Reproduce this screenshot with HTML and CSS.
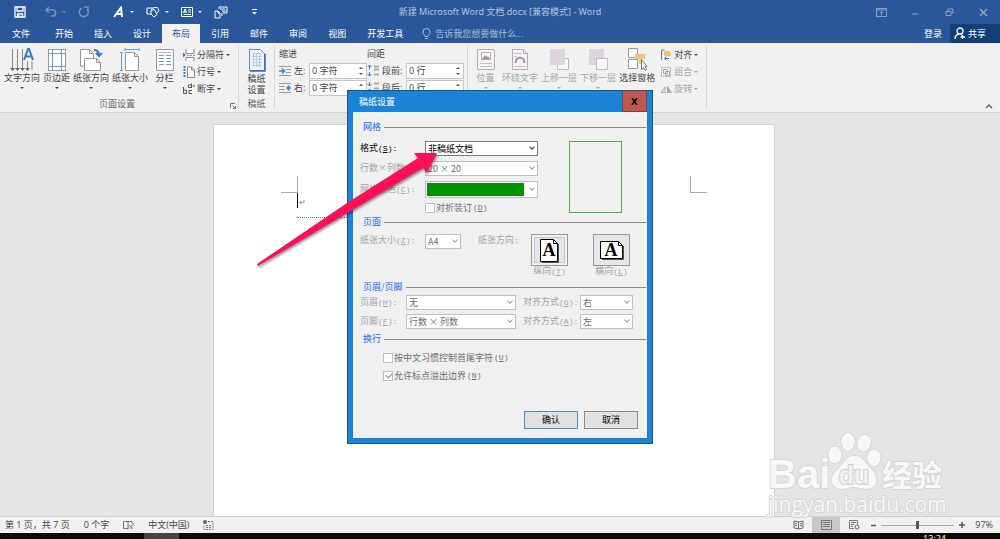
FILE: index.html
```html
<!DOCTYPE html>
<html lang="zh-CN">
<head>
    <meta charset="UTF-8">
    <meta name="viewport" content="width=device-width, initial-scale=1.0">
    <title>新建 Microsoft Word 文档.docx</title>
    <link rel="stylesheet" href="styles.css">
</head>
<body>
    <header class="titlebar">
        <div class="quick">
            <button class="qbtn" aria-label="保存"><svg width="12" height="12" viewBox="0 0 12 12"><path d="M1 1h10v10H1z M3 1v4h6V1 M3.500 11V8h5v3 M5 9v2" fill="none" stroke="#fff" stroke-width="1.300"/></svg></button>
            <button class="qbtn wide dim" aria-label="撤消"><svg width="12" height="12" viewBox="0 0 12 12"><path d="M4 1L1 4l3 3M1 4h6a3 3 0 0 1 1 6H6" fill="none" stroke="#fff" stroke-width="1.500"/></svg><i class="caret"></i></button>
            <button class="qbtn redo dim" aria-label="重复"><svg width="12" height="12" viewBox="0 0 12 12"><path d="M4 2a4.500 4.500 0 1 0 5 1M6 1h4v4" fill="none" stroke="#fff" stroke-width="1.500"/></svg></button>
            <button class="qbtn wide" aria-label="艺术字"><svg width="12" height="12" viewBox="0 0 12 12"><path d="M1 11L8 1.500 9 11M4 8h5" fill="none" stroke="#fff" stroke-width="2"/></svg><i class="caret"></i></button>
            <button class="qbtn wide" aria-label="形状"><svg width="14" height="12" viewBox="0 0 14 12"><path d="M5 8H1V2h6M5 4l3-2.500h3a3 3 0 0 1 0 5.500M5 4.500l3.500-1 2.500 5-3 2.500L5 8z" fill="none" stroke="#fff"/></svg><i class="caret"></i></button>
            <button class="qbtn wide" aria-label="文本框"><svg width="12" height="12" viewBox="0 0 12 12"><path d="M.5 1.500h11v9H.5zM2.500 7l1.500-4L5.500 7M2.500 6h3M7 4h3M7 6h3M2.500 8.500H10" fill="none" stroke="#fff"/></svg><i class="caret"></i></button>
            <button class="qbtn wide" aria-label="切换窗口"><svg width="14" height="13" viewBox="0 0 14 13"><path d="M1 5h3l2 2v5H1zM5 3V1h8v6H9M6 3h5M4 5v2h2M8 5h4M8 7v3" fill="none" stroke="#fff"/></svg></button>
            <button class="qbtn" aria-label="自定义"><svg width="7" height="6" viewBox="0 0 7 6"><path d="M1 .5h5" stroke="#fff"/><path d="M1 3h5L3.500 5.500z" fill="#fff"/></svg></button>
        </div>
        <h1 class="doc-title">新建 Microsoft Word 文档.docx [兼容模式] - Word</h1>
        <div class="window-btns">
            <button aria-label="功能区选项"><svg width="11" height="9" viewBox="0 0 11 9"><path d="M.5.5h10v8H.5zM.5 2h10M5.500 7.500V4M4 5l1.500-1.500L7 5" fill="none" stroke="currentColor"/></svg></button>
            <button aria-label="最小化"><svg width="8" height="9" viewBox="0 0 8 9"><path d="M1 6h6" stroke="currentColor"/></svg></button>
            <button aria-label="还原"><svg width="9" height="9" viewBox="0 0 9 9"><path d="M1 3.500h5v4H1zM3 3V1h5v4H6" fill="none" stroke="currentColor"/></svg></button>
            <button aria-label="关闭"><svg width="9" height="9" viewBox="0 0 9 9"><path d="M1 1l7 7M8 1L1 8" stroke="currentColor" stroke-width="1.500"/></svg></button>
        </div>
    </header>

    <nav class="tabs">
        <button class="tab file">文件</button>
        <button class="tab">开始</button>
        <button class="tab">插入</button>
        <button class="tab">设计</button>
        <button class="tab active">布局</button>
        <button class="tab">引用</button>
        <button class="tab">邮件</button>
        <button class="tab">审阅</button>
        <button class="tab">视图</button>
        <button class="tab">开发工具</button>
        <button class="tell"><svg width="9" height="12" viewBox="0 0 9 12"><path d="M3 8.500C3 7 1 6.500 1 4a3.500 3.500 0 0 1 7 0c0 2.500-2 3-2 4.500zM3 10.500h3" fill="none" stroke="currentColor"/></svg>告诉我您想要做什么...</button>
        <button class="login">登录</button>
        <button class="share"><svg width="12" height="13" viewBox="0 0 12 13"><circle cx="6" cy="4" r="3" fill="none" stroke="#fff" stroke-width="1.300"/><path d="M1 12c0-3 2-4.500 4-5M7 7l1 1M8.500 8v4M6.500 10h4.500" fill="none" stroke="#fff" stroke-width="1.300"/></svg>共享</button>
    </nav>

    <div class="ribbon">
        <section class="group">
            <div class="tools">
                <button class="big"><svg width="24" height="24" viewBox="0 0 24 24"><path d="M2.500 1v21M7.500 1v21M12.500 1v21M17.500 13v9M22 13v9" stroke="#888"/><path d="M0 20h5l-2.500 3zM5 20h5l-2.500 3zM10 20h5l-2.500 3zM15 20h5l-2.500 3z" fill="#666"/><path d="M14 12l4-11h1l4 11M15 8.500h7" fill="none" stroke="#3b7dbd" stroke-width="2"/></svg>文字方向<i class="caret"></i></button>
                <button class="big"><svg width="18" height="24" viewBox="0 0 18 24"><path d="M.5 1.500h17v21H.5z" fill="#fff" stroke="#999"/><path d="M4.500 2v20M13.500 2v20M1 5.500h16M1 18.500h16" stroke="#6c9fd0"/></svg>页边距<i class="caret"></i></button>
                <button class="big"><svg width="24" height="24" viewBox="0 0 24 24"><path d="M1.500 1.500h9l4 4V18h-13zM10.500 1.500v4h4" fill="#fff" stroke="#999"/><path d="M5.500 10.500h12l4 4v8h-16zM17.500 10.500v4h4" fill="#fff" stroke="#999"/><path d="M15 2c4 0 5 2 5 5M17 5l3 3 3-3" fill="none" stroke="#3b7dbd" stroke-width="2"/></svg>纸张方向<i class="caret"></i></button>
                <button class="big"><svg width="22" height="24" viewBox="0 0 22 24"><path d="M6.500 4.500h9l4 4v14h-13zM15.500 4.500v4h4" fill="#fff" stroke="#999"/><path d="M6 1.500h14M6 0v3M20 0v3M2.500 4v18M1 4.500h3M1 22.500h3" stroke="#6c9fd0"/></svg>纸张大小<i class="caret"></i></button>
                <button class="big"><svg width="18" height="24" viewBox="0 0 18 24"><path d="M.5 1.500h17v21H.5z" fill="#fff" stroke="#999"/><path d="M3 4.500h12" stroke="#bbb"/><path d="M3 7.500h5M10 7.500h5M3 10.500h5M10 10.500h5M3 13.500h5M10 13.500h5M3 16.500h5M10 16.500h5" stroke="#6c9fd0"/></svg>分栏<i class="caret"></i></button>
                <div class="stack">
                    <button class="small"><svg width="12" height="12" viewBox="0 0 12 12"><path d="M3 0v4.500h8V0M3 12V8.500h8V12" fill="#fff" stroke="#888"/><path d="M4 6.500h8" stroke="#888" stroke-dasharray="2 1"/><path d="M0 3.500L3 6 0 8.500z" fill="#3b7dbd"/></svg>分隔符<i class="caret"></i></button>
                    <button class="small"><svg width="12" height="12" viewBox="0 0 12 12"><path d="M4.500 1h4l3 3v7.500h-7zM8.500 1v3h3" fill="#fff" stroke="#888"/><path d="M1.500 0v12" stroke="#3b7dbd" stroke-width="2" stroke-dasharray="2 1"/></svg>行号<i class="caret"></i></button>
                    <button class="small"><svg width="12" height="12" viewBox="0 0 12 12"><path d="M.5 4v6.500M.5 7h3v3.500h-3M8.500 4.500h-3V2h3V.500M8.500 2v3M9 7.500H6v3h3M9.500 3h2.500" fill="none" stroke="#555"/></svg>断字<i class="caret"></i></button>
                </div>
            </div>
            <div class="group-name">页面设置<svg class="launcher" width="6" height="6" viewBox="0 0 6 6"><path d="M.5 5V.5H5M2.500 2.500l3 3M5.500 3v2.500H3" fill="none" stroke="#777"/></svg></div>
        </section>
        <section class="group narrow">
            <div class="tools">
                <button class="big"><svg width="18" height="24" viewBox="0 0 18 24"><path d="M1.500 1.500h11l4 4v17h-15z" fill="#eef2f9" stroke="#7089b5"/><path d="M17 6v17H2" fill="none" stroke="#3b68b0" stroke-width="1.500"/><path d="M4 5.500h8M4 8.500h10M4 11.500h10M4 14.500h10M4 17.500h10M5.500 5v14M8.500 5v14M11.500 5v14" stroke="#bccbe4"/></svg><span>稿纸</span><span>设置</span></button>
            </div>
            <div class="group-name">稿纸</div>
        </section>
        <section class="group">
            <div class="spacing">
                <span class="col-name">缩进</span><span class="col-name">间距</span>
                <label class="spin"><svg width="13" height="11" viewBox="0 0 13 11"><path d="M0 1.500h12M7 4.500h5M7 7.500h5M0 10.500h12" stroke="#999"/><path d="M0 6h4M3 3.500L5.500 6 3 8.500" fill="none" stroke="#3b7dbd" stroke-width="1.500"/></svg><span>左:</span><input type="text" value="0 字符"><i class="updown"></i></label>
                <label class="spin gap-col"><svg width="13" height="13" viewBox="0 0 13 13"><path d="M7 2.500h5M7 5.500h5M7 10.500h5" stroke="#aaa" stroke-width="2"/><path d="M2.500 1v4M.5 3l2-2 2 2M2.500 8v4M.5 10l2 2 2-2" fill="none" stroke="#3b7dbd"/></svg><span>段前:</span><input type="text" value="0 行"><i class="updown"></i></label>
                <label class="spin"><svg width="13" height="11" viewBox="0 0 13 11"><path d="M0 1.500h12M0 4.500h6M0 7.500h6M0 10.500h12" stroke="#999"/><path d="M8 6h4M10.500 3.500L8 6l2.500 2.500" fill="none" stroke="#3b7dbd" stroke-width="1.500"/></svg><span>右:</span><input type="text" value="0 字符"><i class="updown"></i></label>
                <label class="spin gap-col"><svg width="13" height="13" viewBox="0 0 13 13"><path d="M7 2.500h5M7 7.500h5M7 10.500h5" stroke="#aaa" stroke-width="2"/><path d="M2.500 1v4M.5 3l2 2 2-2M2.500 8v4M.5 10l2-2 2 2" fill="none" stroke="#3b7dbd"/></svg><span>段后:</span><input type="text" value="0 行"><i class="updown"></i></label>
            </div>
        </section>
        <section class="group">
            <div class="tools">
                <button class="big" disabled><svg width="18" height="24" viewBox="0 0 18 24"><path d="M.5 1.500h17v20H.5z" fill="#f6f2f6" stroke="#b5adb5"/><path d="M4.500 4.500h9v7h-9z" fill="#fff" stroke="#aaa"/><path d="M5 11l3-4 2 2 1-1 2 3z" fill="#999"/><path d="M3 15.500h12M3 18.500h12" stroke="#c5bdc5"/></svg>位置<i class="caret"></i></button>
                <button class="big" disabled><svg width="18" height="24" viewBox="0 0 18 24"><path d="M1.500 1.500h11l4 4v16h-15zM12.500 1.500v4h4" fill="#f6f2f6" stroke="#b5adb5"/><path d="M3 5.500h8M3 8.500h3M3 18.500h12" stroke="#c5bdc5"/><path d="M4.500 15c0-7 9-7 9 0" fill="none" stroke="#999" stroke-width="2"/></svg>环绕文字<i class="caret"></i></button>
                <button class="big" disabled><svg width="22" height="24" viewBox="0 0 22 24"><path d="M9.500 10.500h11v11h-11z" fill="#faf6fa" stroke="#c0b8c0"/><path d="M2 1h15v16H2z" fill="#ddd5dc"/></svg>上移一层<i class="caret"></i></button>
                <button class="big" disabled><svg width="22" height="24" viewBox="0 0 22 24"><path d="M2 1h15v16H2z" fill="#ddd5dc"/><path d="M9.500 10.500h11v11h-11z" fill="#faf6fa" stroke="#c0b8c0"/></svg>下移一层<i class="caret"></i></button>
                <button class="big"><svg width="22" height="24" viewBox="0 0 22 24"><path d="M2.500.5h9v9h-9zM2.500 11.500h9v9h-9z" fill="#fff" stroke="#999"/><path d="M9 6h10v5h-4v5h-2v-5H9z" fill="#efc56f"/><path d="M15.500 11.500v10l2-2 1.500 3 1.500-1-1.500-3h2z" fill="#fff" stroke="#777"/></svg>选择窗格</button>
                <div class="stack">
                    <button class="small"><svg width="12" height="12" viewBox="0 0 12 12"><path d="M4.500 1H1.500v10" fill="none" stroke="#777"/><path d="M4 2h6v2h1v3H4z" fill="#efc56f"/><path d="M9 9.500H5M6.500 7.500l-2 2 2 2" fill="none" stroke="#3b7dbd"/></svg>对齐<i class="caret"></i></button>
                    <button class="small" disabled><svg width="12" height="12" viewBox="0 0 12 12"><path d="M1.500 1.500h9v9h-9z" fill="none" stroke="#aaa" stroke-dasharray="2 1"/><path d="M3.500 3.500h4v4h-4zM5.500 5.500h4v4h-4z" fill="none" stroke="#aaa"/></svg>组合<i class="caret"></i></button>
                    <button class="small" disabled><svg width="12" height="12" viewBox="0 0 12 12"><path d="M7 2v8h5z" fill="#aaa"/><path d="M5 4v5.500H1z" fill="none" stroke="#aaa"/></svg>旋转<i class="caret"></i></button>
                </div>
            </div>
        </section>
        <button class="collapse" aria-label="折叠功能区"><svg width="8" height="6" viewBox="0 0 8 6"><path d="M1 5l3-3 3 3" fill="none" stroke="#666" stroke-width="1.500"/></svg></button>
    </div>

    <main class="workspace">
        <div class="paper">
            <div class="corners"><i class="corner left"></i><i class="corner right"></i></div>
            <p class="line"><i class="cursor"></i>↵</p>
        </div>
    </main>

    <footer class="status">
        <span>第 1 页，共 7 页</span>
        <span>0 个字</span>
        <svg width="11" height="10" viewBox="0 0 11 10"><path d="M5 9.500V1.500H.5v7H5l1-1M5 1.500h4v2M6 5l2 2 3-4M7 8h3" fill="none" stroke="#777"/></svg>
        <span>中文(中国)</span>
        <svg width="11" height="10" viewBox="0 0 11 10"><circle cx="2" cy="2" r="2" fill="#666"/><path d="M5 1.500h5v8H1V5M3 5.500h6M3 7.500h6" fill="none" stroke="#777" stroke-dasharray="2 1"/></svg>
        <div class="views">
            <button aria-label="阅读视图"><svg width="11" height="10" viewBox="0 0 11 10"><path d="M5.500 2L1 1v7l4.500 1L10 8V1zM5.500 2v7M2 3.500l2 .5M2 5.500l2 .5M7 4l2-.5M7 6l2-.5" fill="none" stroke="#666"/></svg></button>
            <button class="on" aria-label="页面视图"><svg width="11" height="10" viewBox="0 0 11 10"><path d="M.5.5h10v9H.5zM2 2.500h7M2 4.500h7M2 6.500h7" fill="none" stroke="#777"/></svg></button>
            <button aria-label="Web 版式"><svg width="11" height="10" viewBox="0 0 11 10"><path d="M5 8.500H.5v-8h8v4M2 2.500h5M2 4.500h3M2 6.500h2" fill="none" stroke="#777"/><circle cx="8" cy="7" r="2" fill="none" stroke="#666"/></svg></button>
        </div>
        <div class="zoom-bar">
            <button aria-label="缩小"><svg width="5" height="5" viewBox="0 0 5 5"><path d="M0 2.500h5" stroke="#555" stroke-width="1.500"/></svg></button>
            <input class="zoom" type="range" min="0" max="100" value="49" aria-label="缩放">
            <button aria-label="放大"><svg width="6" height="6" viewBox="0 0 6 6"><path d="M0 3h6M3 0v6" stroke="#555" stroke-width="1.500"/></svg></button>
        </div>
        <span class="percent">97%</span>
    </footer>
    <div class="taskbar"><span class="task"></span><span class="clock">13:24</span></div>

    <form class="dialog" role="dialog" aria-label="稿纸设置">
        <div class="dialog-title"><span>稿纸设置</span><button type="button" class="close" aria-label="关闭"><svg width="7" height="7" viewBox="0 0 7 7"><path d="M1 0l5 7M6 0L1 7" stroke="#000" stroke-width="1.500"/></svg></button></div>
        <div class="dialog-body">
            <h2>网格</h2>
            <div class="grid-part">
                <div class="fields">
                    <label for="format">格式<span class="key">(<u>S</u>):</span></label>
                    <div class="pick"><select id="format"><option>非稿纸文档</option></select><i class="arrow"></i></div>
                    <label class="off" for="rows">行数×列数<span class="key">:</span></label>
                    <div class="pick off"><select id="rows" disabled><option>20 × 20</option></select><i class="arrow"></i></div>
                    <label class="off" for="color">网格颜色<span class="key">(<u>C</u>):</span></label>
                    <div class="pick off tall"><select id="color" disabled><option></option></select><i class="swatch"></i><i class="arrow"></i></div>
                    <label class="check second off-text"><input type="checkbox" disabled>对折装订<span class="key">(<u>D</u>)</span></label>
                </div>
                <div class="preview"></div>
            </div>

            <h2>页面</h2>
            <div class="page-part">
                <label class="off size-label" for="size">纸张大小<span class="key">(<u>Z</u>):</span></label>
                <div class="pick off size"><select id="size" disabled><option>A4</option></select><i class="arrow"></i></div>
                <span class="off direction">纸张方向<span class="key">:</span></span>
                <div class="orient">
                    <button type="button" id="portrait" class="chosen" disabled><svg width="21" height="25" viewBox="0 0 21 25"><path d="M1.500 1.500h13l4 4v18h-17z" fill="#fff" stroke="#000"/><path d="M14.500 1.500v4h4" fill="none" stroke="#000"/><path d="M19.500 6v18.500H3" fill="none" stroke="#555"/><text class="letter" x="10" y="18" text-anchor="middle">A</text></svg></button>
                    <label class="off" for="portrait">纵向<span class="key">(<u>T</u>)</span></label>
                </div>
                <div class="orient">
                    <button type="button" id="landscape" disabled><svg width="25" height="21" viewBox="0 0 25 21"><path d="M1.500 1.500h18l4 4v13h-22z" fill="#fff" stroke="#000"/><path d="M19.500 1.500v4h4" fill="none" stroke="#000"/><path d="M24.500 6v13.500H3" fill="none" stroke="#555"/><text class="letter" x="12" y="16" text-anchor="middle">A</text></svg></button>
                    <label class="off" for="landscape">横向<span class="key">(<u>L</u>)</span></label>
                </div>
            </div>

            <h2>页眉/页脚</h2>
            <div class="header-part">
                <label class="off" for="head">页眉<span class="key">(<u>H</u>):</span></label>
                <div class="pick off"><select id="head" disabled><option>无</option></select><i class="arrow"></i></div>
                <label class="off align" for="head-align">对齐方式<span class="key">(<u>G</u>):</span></label>
                <div class="pick off"><select id="head-align" disabled><option>右</option></select><i class="arrow"></i></div>
                <label class="off" for="foot">页脚<span class="key">(<u>F</u>):</span></label>
                <div class="pick off"><select id="foot" disabled><option>行数 × 列数</option></select><i class="arrow"></i></div>
                <label class="off align" for="foot-align">对齐方式<span class="key">(<u>A</u>):</span></label>
                <div class="pick off"><select id="foot-align" disabled><option>左</option></select><i class="arrow"></i></div>
            </div>

            <h2>换行</h2>
            <div class="wrap-part">
                <label class="check off-text"><input type="checkbox" disabled>按中文习惯控制首尾字符<span class="key">(<u>U</u>)</span></label>
                <label class="check off-text"><input type="checkbox" checked disabled>允许标点溢出边界<span class="key">(<u>N</u>)</span></label>
            </div>

            <div class="actions">
                <button type="button" class="ok">确认</button>
                <button type="button">取消</button>
            </div>
        </div>
        <!-- 指示箭头 -->
        <svg class="pointer" width="184" height="118" viewBox="0 0 184 118"><path d="M0 112L90 51 161 6l-4-5 23 0-10 20-4-5L92 60 1 114z" fill="#fb1058"/></svg>
    </form>

    <svg class="watermark" width="184" height="90" viewBox="0 0 184 90">
        <g class="mark">
            <text class="bai" x="2" y="58">Bai</text>
            <ellipse cx="69" cy="25" rx="6.500" ry="8.500"/>
            <ellipse cx="82" cy="12" rx="6.500" ry="9"/>
            <ellipse cx="98" cy="13" rx="6.500" ry="8.500" transform="rotate(12 98 13)"/>
            <ellipse cx="108" cy="28" rx="6.500" ry="8.500"/>
            <path d="M88 26c10 0 11 8 17 13 9 8 7 20-5 20-4 0-8-2-12-2s-8 2-12 2c-12 0-13-13-4-20 6-5 7-13 16-13z"/>
            <text class="jingyan" x="116" y="56">经验</text>
            <text class="site" x="2" y="82">jingyan.baidu.com</text>
        </g>
        <text class="du" x="88" y="54" text-anchor="middle">du</text>
    </svg>
</body>
</html>
```

FILE: styles.css
```css
* {
    box-sizing: border-box;
}
body {
    margin: 0;
    height: 100vh;
    display: flex;
    flex-direction: column;
    position: relative;
    overflow: hidden;
    background: #e5e5e5;
    color: #444;
    font: 9px/12px "Open Sans", "Noto Sans CJK SC", sans-serif;
}
button, input, select {
    font: inherit;
    color: inherit;
    margin: 0;
    padding: 0;
    border: 0;
    background: none;
}
svg {
    display: block;
    flex: none;
}
.caret {
    width: 0;
    height: 0;
    border: 2px solid transparent;
    border-top-color: currentColor;
    border-bottom: 0;
}

/* 标题栏 */
.titlebar {
    height: 24px;
    display: flex;
    align-items: center;
    background: #2a579a;
    color: #fff;
}
.quick {
    flex: 1;
    display: flex;
    align-items: center;
    gap: 12px;
}
.qbtn {
    display: flex;
    align-items: center;
    gap: 4px;
}
.qbtn:first-child {
    margin: 0 7px 0 14px;
}
.wide .caret {
    margin-left: 1px;
}
.qbtn.redo {
    margin-right: 11px;
}
.qbtn:last-child {
    margin-left: 11px;
}
.dim {
    opacity: 0.35;
}
.doc-title {
    margin: 0;
    font-family: "Noto Sans", "Noto Sans CJK SC", sans-serif;
    font-size: 9px;
    font-weight: normal;
    color: #b4c5de;
}
.window-btns {
    flex: 1;
    display: flex;
    justify-content: flex-end;
    color: #8aa3c9;
}
.window-btns button {
    width: 34px;
    display: flex;
    justify-content: center;
}

/* 选项卡 */
.tabs {
    height: 19px;
    display: flex;
    gap: 1px;
    background: #2a579a;
    color: #fff;
}
.tab {
    padding: 0 10px;
}
.tab.file {
    margin: 0 4px 0 2px;
}
.tab.active {
    background: #f1f1f1;
    color: #2a579a;
}
.tell {
    display: flex;
    align-items: center;
    gap: 4px;
    margin-left: 8px;
    color: #a9bcd9;
}
.login {
    margin-left: auto;
    padding: 0 7px;
}
.share {
    width: 50px;
    display: flex;
    align-items: center;
    gap: 2px;
    padding-left: 4px;
    background: #143f76;
}

/* 功能区 */
.ribbon {
    height: 70px;
    display: flex;
    padding: 3px 0;
    background: #f1f1f1;
    border-bottom: 1px solid #d2d2d2;
}
.group {
    display: flex;
    flex-direction: column;
    justify-content: space-between;
    padding: 0 8px 0 4px;
    border-right: 1px solid #d8d8d8;
}
.group.narrow {
    padding: 0 4px;
}
.tools {
    display: flex;
    gap: 3px;
}
.big {
    min-width: 27px;
    display: flex;
    flex-direction: column;
    align-items: center;
    line-height: 10px;
}
.big svg {
    margin: 2px 0 1px;
}
.big .caret {
    margin-top: 4px;
}
.big:disabled, .small:disabled {
    color: #a5a5a5;
}
.stack {
    display: flex;
    flex-direction: column;
    padding-left: 2px;
}
.small {
    height: 17px;
    display: flex;
    align-items: center;
    gap: 2px;
}
.group-name {
    display: flex;
    justify-content: center;
    align-items: center;
    position: relative;
    height: 10px;
    color: #666;
}
.launcher {
    position: absolute;
    right: -6px;
    bottom: 0;
}
.narrow .big {
    width: 27px;
    line-height: 11px;
}
.spacing {
    display: grid;
    grid-template-columns: 88px 97px;
    grid-template-rows: 16px 17px 17px;
}
.group:has(.spacing) {
    padding: 0 3px 0 4px;
}
.col-name {
    line-height: 15px;
}
.spin {
    display: flex;
    align-items: center;
    gap: 2px;
    position: relative;
}
.spin span {
    width: 13px;
}
.gap-col span {
    width: 22px;
}
.spin input {
    flex: 1;
    min-width: 0;
    height: 16px;
    padding-left: 2px;
    background: #fff;
    border: 1px solid #c6c6c6;
}
.updown {
    position: absolute;
    right: 4px;
    top: 5px;
    height: 2px;
    border: 2px solid transparent;
    border-top: 0;
    border-bottom: 2px solid #555;
}
.updown::after {
    content: "";
    position: absolute;
    left: -2px;
    top: 6px;
    border: 2px solid transparent;
    border-top-color: #555;
    border-bottom: 0;
}
.collapse {
    margin: auto 7px 0 auto;
}

/* 文档区 */
.workspace {
    flex: 1;
    min-height: 0;
    display: flex;
    justify-content: center;
    padding: 11px 13px 0 0;
}
.paper {
    width: 562px;
    padding: 51px 67px 0;
    background: #fff;
    border: 1px solid #d0d0d0;
    border-bottom: 0;
}
.corners {
    display: flex;
    justify-content: space-between;
}
.corner {
    width: 17px;
    height: 17px;
    border-bottom: 1px solid #aaa;
}
.corner.left {
    border-right: 1px solid #aaa;
}
.corner.right {
    border-left: 1px solid #aaa;
}
.line {
    width: 200px;
    height: 25px;
    margin: 0 0 0 16px;
    display: flex;
    gap: 1px;
    font-size: 8px;
    line-height: 18px;
    color: #777;
    border-bottom: 1px dotted #777;
}
.cursor {
    width: 1px;
    height: 15px;
    background: #000;
}

/* 状态栏 */
.status {
    height: 17px;
    display: flex;
    align-items: center;
    gap: 14px;
    padding: 0 7px 0 5px;
    background: #f1f1f1;
    border-top: 1px solid #cfcfcf;
}
.views {
    display: flex;
    align-self: stretch;
    margin-left: auto;
}
.views button {
    width: 28px;
    display: flex;
    align-items: center;
    justify-content: center;
}
.views .on {
    background: #c9c9c9;
}
.zoom-bar {
    display: flex;
    align-items: center;
    gap: 5px;
    margin: 0 -4px 0 -11px;
}
.zoom {
    appearance: none;
    width: 73px;
    height: 9px;
    background: linear-gradient(#aaa, #aaa) center / 100% 1px no-repeat;
}
.zoom::-webkit-slider-thumb {
    appearance: none;
    width: 3px;
    height: 8px;
    background: #555;
}
.taskbar {
    height: 6px;
    display: flex;
    overflow: hidden;
    padding: 0 54px 0 144px;
    background: #0b0c08;
    color: #fff;
}
.task {
    width: 35px;
    background: #444;
}
.clock {
    margin-left: auto;
    line-height: 12px;
}

/* 稿纸设置对话框 */
.dialog {
    position: absolute;
    top: 90px;
    left: 50%;
    width: 306px;
    margin-left: -153px;
    padding: 0 5px 5px;
    background: #1a82d7;
    border: 1px solid #23527c;
    color: #000;
    font-family: "Noto Sans CJK SC", sans-serif;
}
.dialog-title {
    height: 21px;
    display: flex;
    justify-content: space-between;
    align-items: center;
    padding-left: 6px;
    color: #fff;
}
.close {
    width: 25px;
    height: 21px;
    display: flex;
    align-items: center;
    justify-content: center;
    background: #c1584f;
    border: 1px solid #7a4350;
    border-top: 0;
}
.dialog-body {
    padding: 9px 1px 9px 7px;
    background: #f0f0f0;
}
.dialog h2 {
    display: flex;
    align-items: center;
    gap: 3px;
    margin: 0 0 0 3px;
    font-size: 9px;
    font-weight: normal;
    line-height: 12px;
    color: #1668f0;
}
.dialog h2::after {
    content: "";
    flex: 1;
    height: 1px;
    background: #8c8c8c;
}
.key {
    font-family: "Liberation Mono", monospace;
    font-size: 8px;
}
.off {
    color: #a3a3a3;
}
.off-text {
    color: #6d6d6d;
}
.pick {
    position: relative;
    height: 15px;
}
.pick.tall {
    height: 17px;
}
.pick select {
    appearance: none;
    display: block;
    width: 100%;
    height: 100%;
    padding: 0 2px;
    background: #fff;
    border: 1px solid #7a7a7a;
    opacity: 1;
}
.pick.off select {
    color: #6d6d6d;
    border-color: #bfbfbf;
}
.arrow {
    position: absolute;
    right: 4px;
    top: 4px;
    width: 4px;
    height: 4px;
    border: solid #333;
    border-width: 0 1px 1px 0;
    transform: rotate(45deg);
}
.off .arrow {
    border-color: #999;
}
.tall .arrow {
    top: 5px;
}
.swatch {
    position: absolute;
    left: 2px;
    right: 14px;
    top: 2px;
    bottom: 2px;
    background: #009300;
}
.grid-part {
    display: flex;
    justify-content: space-between;
    padding: 8px 24px 3px 0;
}
.fields {
    display: grid;
    grid-template-columns: 65px 113px;
    row-gap: 5px;
    align-items: center;
}
.preview {
    width: 53px;
    border: 1px solid #4db04d;
}
.check {
    display: flex;
    align-items: center;
    gap: 1px;
    line-height: 10px;
}
.check.second {
    grid-column: 2;
}
.check input {
    appearance: none;
    width: 10px;
    height: 10px;
    background: #fff;
    border: 1px solid #bfbfbf;
}
.check input:checked::after {
    content: "";
    display: block;
    width: 3px;
    height: 5px;
    margin: 0 0 0 3px;
    border: solid #888;
    border-width: 0 1px 1px 0;
    transform: rotate(45deg);
}
.page-part {
    display: flex;
    padding: 6px 16px 4px 0;
}
.size-label {
    width: 65px;
}
.size {
    width: 36px;
}
.direction {
    margin: 0 auto 0 17px;
}
.orient {
    display: flex;
    flex-direction: column;
    align-items: center;
    margin-left: 25px;
    line-height: 10px;
}
.direction + .orient {
    margin-left: 0;
}
.orient button {
    width: 37px;
    height: 32px;
    display: flex;
    align-items: center;
    justify-content: center;
    background: #e6e6e6;
    border: 1px solid #999;
}
.orient .chosen {
    box-shadow: inset 0 0 0 2px #f0f0f0, inset 0 0 0 3px #b9cbe0;
}
.letter {
    font: bold 18px "Liberation Serif", serif;
    fill: #000;
}
.header-part {
    display: grid;
    grid-template-columns: 46px 110px 64px 53px;
    row-gap: 4px;
    align-items: center;
    padding: 2px 0 4px;
}
.align {
    padding-left: 7px;
}
.wrap-part {
    display: flex;
    flex-direction: column;
    gap: 8px;
    padding: 8px 0 30px 23px;
}
.actions {
    display: flex;
    justify-content: flex-end;
    gap: 6px;
    padding-right: 8px;
}
.actions button {
    width: 54px;
    height: 18px;
    background: #e1e1e1;
    border: 1px solid #8c8c8c;
}
.actions .ok {
    border-color: #4a90c4;
}
.pointer {
    position: absolute;
    left: -91px;
    top: 61px;
    filter: drop-shadow(1px 2px 1px rgba(0, 0, 0, 0.4));
    pointer-events: none;
}

/* 水印 */
.watermark {
    position: absolute;
    right: 50px;
    bottom: 19px;
    font-family: "Open Sans", "Noto Sans CJK SC", sans-serif;
    pointer-events: none;
}
.mark {
    fill: #f8f8f8;
    stroke: #d6d6d6;
    stroke-width: 2px;
    paint-order: stroke;
}
.bai {
    font: bold 40px "Liberation Sans", sans-serif;
}
.du {
    font: bold 25px "Liberation Sans", sans-serif;
    fill: #f0f0f0;
    stroke: #cfcfcf;
    stroke-width: 2px;
    paint-order: stroke;
}
.jingyan {
    font-weight: bold;
    font-size: 30px;
}
.site {
    font-size: 21px;
}
```
